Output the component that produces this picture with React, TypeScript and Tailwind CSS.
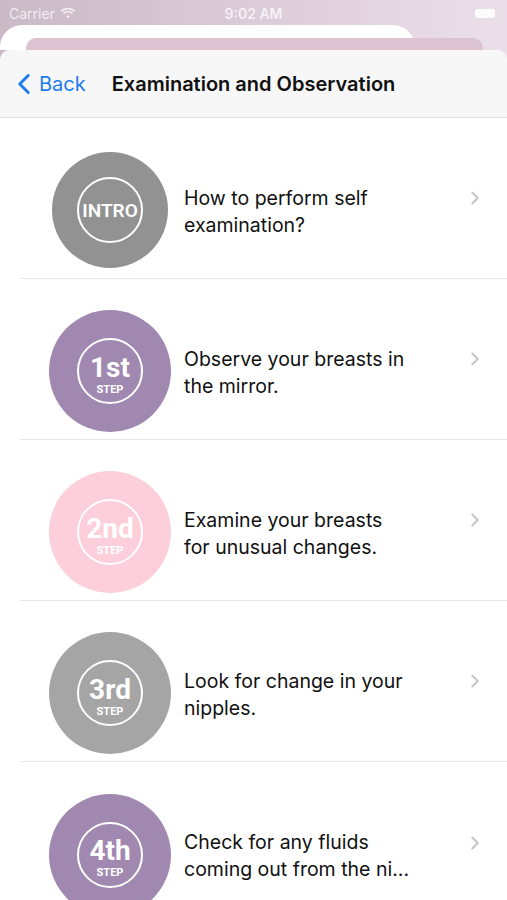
import React from "react";
import { ChevronLeft, ChevronRight } from "lucide-react";

type Step = {
  label: string;
  sub?: string;
  color: string;
  size: string;
  text: string[];
};

const steps: Step[] = [
  { label: "INTRO", color: "bg-[#929292]", size: "w-[116px] h-[116px]", text: ["How to perform self", "examination?"] },
  { label: "1st", sub: "STEP", color: "bg-[#a088b0]", size: "w-[122px] h-[122px]", text: ["Observe your breasts in", "the mirror."] },
  { label: "2nd", sub: "STEP", color: "bg-[#fccfda]", size: "w-[122px] h-[122px]", text: ["Examine your breasts", "for unusual changes."] },
  { label: "3rd", sub: "STEP", color: "bg-[#a5a5a5]", size: "w-[122px] h-[122px]", text: ["Look for change in your", "nipples."] },
  { label: "4th", sub: "STEP", color: "bg-[#a088b0]", size: "w-[122px] h-[122px]", text: ["Check for any fluids", "coming out from the ni..."] },
];

function Badge({ step }: { step: Step }) {
  return (
    <div className={`${step.size} ${step.color} rounded-full flex items-center justify-center shrink-0`}>
      <div className="w-[66px] h-[66px] rounded-full border-2 border-white flex flex-col items-center justify-center text-white font-['Roboto',sans-serif]">
        {step.sub ? (
          <>
            <span className="text-[28px] font-bold leading-[26px] mt-[8px]">{step.label}</span>
            <span className="text-[11px] font-bold leading-[12px] mt-[3px]">{step.sub}</span>
          </>
        ) : (
          <span className="text-[19px] font-semibold leading-none">{step.label}</span>
        )}
      </div>
    </div>
  );
}

function StatusBar() {
  return (
    <div className="h-[26px] flex items-center justify-between px-[9px] text-white/75 text-[14px] font-['Inter',sans-serif]">
      <div className="flex items-center gap-[5px] w-[100px]">
        <span>Carrier</span>
        <svg width="16" height="12" viewBox="0 0 16 12" fill="currentColor">
          <path d="M8 2.5c2.4 0 4.6.9 6.2 2.5l1.2-1.2C13.4 1.8 10.8.8 8 .8S2.6 1.8.6 3.8L1.8 5C3.4 3.4 5.6 2.5 8 2.5z" />
          <path d="M8 5.6c1.5 0 2.9.6 4 1.6l1.2-1.2C11.8 4.7 10 4 8 4s-3.8.7-5.2 2l1.2 1.2c1.1-1 2.5-1.6 4-1.6z" />
          <path d="M8 8.6c.7 0 1.3.3 1.8.7L8 11.2 6.2 9.3c.5-.4 1.1-.7 1.8-.7z" />
        </svg>
      </div>
      <span className="font-semibold">9:02 AM</span>
      <div className="w-[100px] flex justify-end pr-[3px]">
        <div className="w-[20px] h-[9px] rounded-[3px] bg-white/90" />
      </div>
    </div>
  );
}

export default function App() {
  return (
    <div className="w-[507px] h-[900px] overflow-hidden bg-gradient-to-r from-[#cbb9c6] via-[#dccbd8] to-[#ebe0ea] font-['Inter',sans-serif]">
      <div className="relative h-[50px]">
        <StatusBar />
        {/* stacked sheets behind */}
        <div className="absolute left-0 top-[25px] w-[415px] h-[25px] bg-white rounded-t-[22px]" />
        <div className="absolute left-[26px] top-[38px] w-[457px] h-[12px] bg-[#dcc3d1] rounded-t-[10px]" />
      </div>
      <div className="relative bg-white rounded-t-[10px] overflow-hidden h-[850px]">
        <div className="h-[68px] bg-[#f7f7f7] border-b border-[#e2e2e2] flex items-center">
          <div className="flex items-center text-[#1c7cf0] pl-[7px]">
            <ChevronLeft size={34} strokeWidth={2.1} className="-mr-[2px]" />
            <span className="text-[20px]">Back</span>
          </div>
          <span className="ml-[26px] text-[20px] font-semibold text-[#111]">Examination and Observation</span>
        </div>
        <div>
          {steps.map((s, i) => (
            <div key={s.label} className="pl-[20px]">
              <div className={`h-[161px] flex items-center pr-[20px] pt-[24px] ${i < steps.length - 1 ? "border-b border-[#e6e6e6]" : ""}`}>
                <div className="w-[164px] flex justify-center pl-[16px] shrink-0">
                  <Badge step={s} />
                </div>
                <div className="flex-1 text-[19.5px] leading-[27px] text-[#111] pt-[3px]">
                  {s.text.map((t) => (
                    <div key={t}>{t}</div>
                  ))}
                </div>
                <ChevronRight size={22} strokeWidth={2} className="text-[#c4c4c7] mr-[1px] mb-[24px]" />
              </div>
            </div>
          ))}
        </div>
      </div>
    </div>
  );
}
